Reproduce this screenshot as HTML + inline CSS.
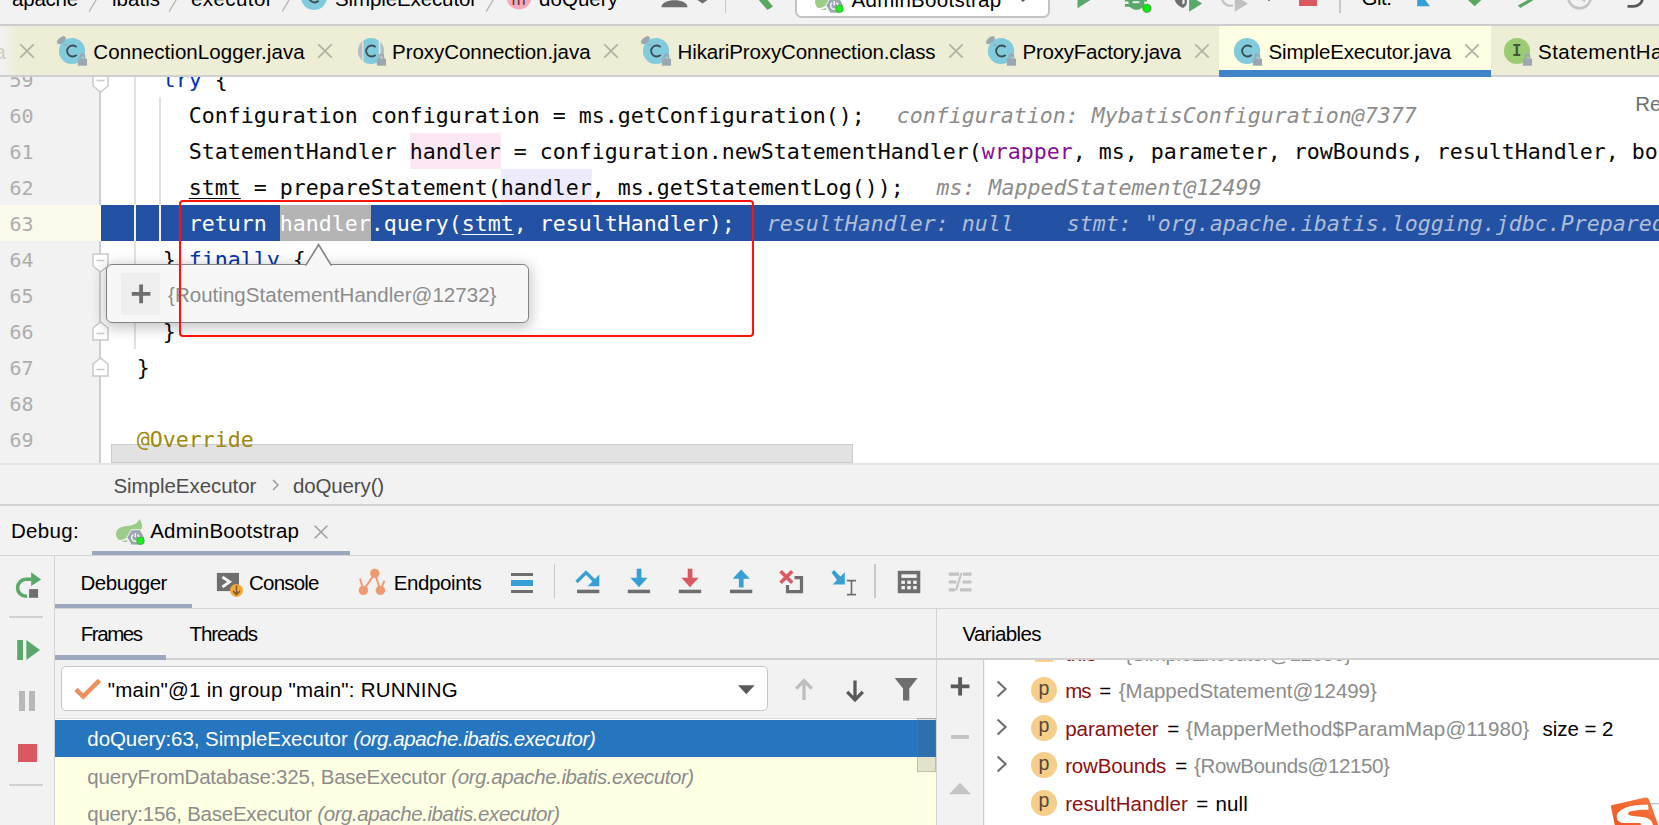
<!DOCTYPE html>
<html lang="en"><head><meta charset="utf-8"><title>SimpleExecutor.java - Debug</title>
<style>
html,body{margin:0;padding:0}
body{width:1659px;height:825px;overflow:hidden;background:#fff;position:relative;font-family:"Liberation Sans",sans-serif}
body>div,body>span,body>svg{position:absolute;display:block}
span{white-space:pre;line-height:1}
</style></head>
<body>
<div style="left:0px;top:77px;width:100px;height:386px;background:#f2f2f2;"></div>
<div style="left:99.3px;top:77px;width:1.5px;height:386px;background:#cfcfcf;"></div>
<div style="left:0px;top:205px;width:100.8px;height:36px;background:#fcfaed;"></div>
<div style="left:100.8px;top:205px;width:1559px;height:36px;background:#2352a5;"></div>
<div style="left:134.3px;top:77px;width:1.5px;height:272px;background:#e2e2e2;"></div>
<div style="left:159.3px;top:97px;width:1.5px;height:144px;background:#e2e2e2;"></div>
<div style="left:159.3px;top:277px;width:1.5px;height:36px;background:#e2e2e2;"></div>
<div style="left:133.9px;top:205px;width:2.1px;height:36px;background:#f6f1e6;"></div>
<div style="left:158.9px;top:205px;width:2.1px;height:36px;background:#f6f1e6;"></div>
<div style="left:410px;top:133px;width:90.5px;height:36px;background:#fce8f4;"></div>
<div style="left:501px;top:169px;width:91px;height:36px;background:#edebfc;"></div>
<div style="left:280px;top:205px;width:91px;height:36px;background:#b4b4b4;"></div>
<span style="left:9.6px;top:70.48px;font-size:20px;color:#adadad;font-family:'DejaVu Sans Mono', 'Liberation Mono', monospace;letter-spacing:-0.047px;">59</span>
<span style="left:9.6px;top:106.48px;font-size:20px;color:#adadad;font-family:'DejaVu Sans Mono', 'Liberation Mono', monospace;letter-spacing:-0.047px;">60</span>
<span style="left:9.6px;top:142.48px;font-size:20px;color:#adadad;font-family:'DejaVu Sans Mono', 'Liberation Mono', monospace;letter-spacing:-0.047px;">61</span>
<span style="left:9.6px;top:178.48px;font-size:20px;color:#adadad;font-family:'DejaVu Sans Mono', 'Liberation Mono', monospace;letter-spacing:-0.047px;">62</span>
<span style="left:9.6px;top:214.48px;font-size:20px;color:#adadad;font-family:'DejaVu Sans Mono', 'Liberation Mono', monospace;letter-spacing:-0.047px;">63</span>
<span style="left:9.6px;top:250.48px;font-size:20px;color:#adadad;font-family:'DejaVu Sans Mono', 'Liberation Mono', monospace;letter-spacing:-0.047px;">64</span>
<span style="left:9.6px;top:286.48px;font-size:20px;color:#adadad;font-family:'DejaVu Sans Mono', 'Liberation Mono', monospace;letter-spacing:-0.047px;">65</span>
<span style="left:9.6px;top:322.48px;font-size:20px;color:#adadad;font-family:'DejaVu Sans Mono', 'Liberation Mono', monospace;letter-spacing:-0.047px;">66</span>
<span style="left:9.6px;top:358.48px;font-size:20px;color:#adadad;font-family:'DejaVu Sans Mono', 'Liberation Mono', monospace;letter-spacing:-0.047px;">67</span>
<span style="left:9.6px;top:394.48px;font-size:20px;color:#adadad;font-family:'DejaVu Sans Mono', 'Liberation Mono', monospace;letter-spacing:-0.047px;">68</span>
<span style="left:9.6px;top:430.48px;font-size:20px;color:#adadad;font-family:'DejaVu Sans Mono', 'Liberation Mono', monospace;letter-spacing:-0.047px;">69</span>
<span style="left:162.8px;top:69.03px;font-size:21.6px;color:#0033b3;font-family:'DejaVu Sans Mono', 'Liberation Mono', monospace;letter-spacing:-0.005px;">try</span>
<span style="left:214.8px;top:69.03px;font-size:21.6px;color:#080808;font-family:'DejaVu Sans Mono', 'Liberation Mono', monospace;letter-spacing:-0.016px;">{</span>
<span style="left:188.8px;top:105.03px;font-size:21.6px;color:#080808;font-family:'DejaVu Sans Mono', 'Liberation Mono', monospace;letter-spacing:-0.001px;">Configuration configuration = ms.getConfiguration();</span>
<span style="left:896.8px;top:105.03px;font-size:21.6px;color:#8c8c8c;font-family:'DejaVu Sans Mono', 'Liberation Mono', monospace;font-style:italic;letter-spacing:-0.001px;">configuration: MybatisConfiguration@7377</span>
<span style="left:188.8px;top:141.03px;font-size:21.6px;color:#080808;font-family:'DejaVu Sans Mono', 'Liberation Mono', monospace;letter-spacing:-0.001px;">StatementHandler handler = configuration.newStatementHandler(</span>
<span style="left:981.8px;top:141.03px;font-size:21.6px;color:#871094;font-family:'DejaVu Sans Mono', 'Liberation Mono', monospace;letter-spacing:-0.002px;">wrapper</span>
<span style="left:1072.8px;top:141.03px;font-size:21.6px;color:#080808;font-family:'DejaVu Sans Mono', 'Liberation Mono', monospace;letter-spacing:-0.001px;">, ms, parameter, rowBounds, resultHandler, boundSql);</span>
<span style="left:188.8px;top:177.03px;font-size:21.6px;color:#080808;font-family:'DejaVu Sans Mono', 'Liberation Mono', monospace;letter-spacing:-0.004px;text-decoration:underline;text-decoration-thickness:1.1px;text-underline-offset:2.6px;">stmt</span>
<span style="left:240.8px;top:177.03px;font-size:21.6px;color:#080808;font-family:'DejaVu Sans Mono', 'Liberation Mono', monospace;letter-spacing:-0.001px;"> = prepareStatement(handler, ms.getStatementLog());</span>
<span style="left:936.6px;top:177.03px;font-size:21.6px;color:#8c8c8c;font-family:'DejaVu Sans Mono', 'Liberation Mono', monospace;font-style:italic;letter-spacing:-0.001px;">ms: MappedStatement@12499</span>
<span style="left:188.8px;top:213.03px;font-size:21.6px;color:#ffffff;font-family:'DejaVu Sans Mono', 'Liberation Mono', monospace;letter-spacing:-0.001px;">return handler.query(</span>
<span style="left:461.8px;top:213.03px;font-size:21.6px;color:#ffffff;font-family:'DejaVu Sans Mono', 'Liberation Mono', monospace;letter-spacing:-0.004px;text-decoration:underline;text-decoration-thickness:1.1px;text-underline-offset:2.6px;">stmt</span>
<span style="left:513.8px;top:213.03px;font-size:21.6px;color:#ffffff;font-family:'DejaVu Sans Mono', 'Liberation Mono', monospace;letter-spacing:-0.001px;">, resultHandler);</span>
<span style="left:766.8px;top:213.03px;font-size:21.6px;color:#b0bdd6;font-family:'DejaVu Sans Mono', 'Liberation Mono', monospace;font-style:italic;letter-spacing:-0.001px;">resultHandler: null</span>
<span style="left:1066.8px;top:213.03px;font-size:21.6px;color:#b0bdd6;font-family:'DejaVu Sans Mono', 'Liberation Mono', monospace;font-style:italic;letter-spacing:-0.001px;">stmt: &quot;org.apache.ibatis.logging.jdbc.PreparedStatementLogger@1f1cae23&quot;</span>
<span style="left:162.8px;top:249.03px;font-size:21.6px;color:#080808;font-family:'DejaVu Sans Mono', 'Liberation Mono', monospace;letter-spacing:-0.016px;">}</span>
<span style="left:188.8px;top:249.03px;font-size:21.6px;color:#0033b3;font-family:'DejaVu Sans Mono', 'Liberation Mono', monospace;letter-spacing:-0.002px;">finally</span>
<span style="left:292.8px;top:249.03px;font-size:21.6px;color:#080808;font-family:'DejaVu Sans Mono', 'Liberation Mono', monospace;letter-spacing:-0.016px;">{</span>
<span style="left:188.8px;top:285.03px;font-size:21.6px;color:#080808;font-family:'DejaVu Sans Mono', 'Liberation Mono', monospace;letter-spacing:-0.001px;">closeStatement(stmt);</span>
<span style="left:162.8px;top:321.03px;font-size:21.6px;color:#080808;font-family:'DejaVu Sans Mono', 'Liberation Mono', monospace;letter-spacing:-0.016px;">}</span>
<span style="left:136.8px;top:357.03px;font-size:21.6px;color:#080808;font-family:'DejaVu Sans Mono', 'Liberation Mono', monospace;letter-spacing:-0.016px;">}</span>
<span style="left:136.8px;top:429.03px;font-size:21.6px;color:#9e880d;font-family:'DejaVu Sans Mono', 'Liberation Mono', monospace;letter-spacing:-0.002px;z-index:3;">@Override</span>
<svg style="left:91.6px;top:72.7px;" width="17" height="20" viewBox="0 0 17 20"><path d="M1 1 H16 V13 L8.5 19 L1 13 Z" fill="#fff" stroke="#c9c9c9" stroke-width="1.5"/><path d="M4.5 7.5 H12.5" stroke="#c9c9c9" stroke-width="1.5"/></svg>
<svg style="left:91.6px;top:252.7px;" width="17" height="20" viewBox="0 0 17 20"><path d="M1 1 H16 V13 L8.5 19 L1 13 Z" fill="#fff" stroke="#c9c9c9" stroke-width="1.5"/><path d="M4.5 7.5 H12.5" stroke="#c9c9c9" stroke-width="1.5"/></svg>
<svg style="left:91.6px;top:321.1px;" width="17" height="20" viewBox="0 0 17 20"><path d="M1 19 H16 V7 L8.5 1 L1 7 Z" fill="#fff" stroke="#c9c9c9" stroke-width="1.5"/><path d="M4.5 12.5 H12.5" stroke="#c9c9c9" stroke-width="1.5"/></svg>
<svg style="left:91.6px;top:357.1px;" width="17" height="20" viewBox="0 0 17 20"><path d="M1 19 H16 V7 L8.5 1 L1 7 Z" fill="#fff" stroke="#c9c9c9" stroke-width="1.5"/><path d="M4.5 12.5 H12.5" stroke="#c9c9c9" stroke-width="1.5"/></svg>
<span style="left:1635.3px;top:93.55px;font-size:20.5px;color:#707070;">Re</span>
<div style="left:100.8px;top:444.5px;width:1559px;height:18.5px;background:#ffffff;"></div>
<div style="left:111px;top:444.2px;width:741.7px;height:18.8px;background:#e2e2e2;border:1.3px solid #cbcbcb;box-sizing:border-box"></div>
<div style="left:0px;top:0px;width:1659px;height:25px;background:#f2f2f2;"></div>
<div style="left:0px;top:24.3px;width:1659px;height:1.7px;background:#cdcdcd;"></div>
<span style="left:12px;top:-11.05px;font-size:20.5px;color:#000;letter-spacing:-0.211px;">apache</span>
<svg style="left:88px;top:0px;" width="12" height="13" viewBox="0 0 12 13"><path d="M8.6 -1 L1.2 11.6" stroke="#b4b4b4" stroke-width="1.3"/></svg>
<span style="left:112px;top:-11.05px;font-size:20.5px;color:#000;letter-spacing:0.023px;">ibatis</span>
<svg style="left:168px;top:0px;" width="12" height="13" viewBox="0 0 12 13"><path d="M8.6 -1 L1.2 11.6" stroke="#b4b4b4" stroke-width="1.3"/></svg>
<span style="left:191px;top:-11.05px;font-size:20.5px;color:#000;letter-spacing:0.420px;">executor</span>
<svg style="left:281px;top:0px;" width="12" height="13" viewBox="0 0 12 13"><path d="M8.6 -1 L1.2 11.6" stroke="#b4b4b4" stroke-width="1.3"/></svg>
<svg style="left:300px;top:-17px;" width="28" height="28" viewBox="0 0 28 28"><circle cx="14" cy="14" r="13" fill="#82cbdc"/><path d="M18.6 17.6a5.4 5.4 0 1 1 0-7.2" fill="none" stroke="#3b4b53" stroke-width="2"/></svg>
<span style="left:335px;top:-11.05px;font-size:20.5px;color:#000;letter-spacing:-0.112px;">SimpleExecutor</span>
<svg style="left:485px;top:0px;" width="12" height="13" viewBox="0 0 12 13"><path d="M8.6 -1 L1.2 11.6" stroke="#b4b4b4" stroke-width="1.3"/></svg>
<svg style="left:505.5px;top:-15.6px;" width="26" height="26" viewBox="0 0 26 26"><circle cx="13" cy="13" r="12.5" fill="#f4a9bb"/></svg>
<span style="left:511.5px;top:-8.79px;font-size:17px;color:#5a3540;">m</span>
<span style="left:539px;top:-11.05px;font-size:20.5px;color:#000;letter-spacing:0.051px;">doQuery</span>
<svg style="left:660px;top:0px;" width="50" height="10" viewBox="0 0 50 10"><path d="M1.5 7.2 C1.5 -2 27.5 -2 27.5 7.2 Z" fill="#6e6e6e"/><path d="M37.5 0 L47.5 0 L42.5 3.6 Z" fill="#6e6e6e"/></svg>
<div style="left:724.5px;top:0px;width:1.6px;height:12.6px;background:#c8c8c8;"></div>
<svg style="left:750px;top:0px;" width="30" height="12" viewBox="0 0 30 12"><path d="M7 -2 L12.5 -6 L23 6.6 L17.5 10 Z" fill="#5aa55f"/></svg>
<div style="left:794.6px;top:-20px;width:255.6px;height:37.6px;background:#fff;border:2px solid #c4c4c4;border-radius:6.5px;box-sizing:border-box"></div>
<svg style="left:813px;top:-16.3px;" width="34" height="32" viewBox="0 0 34 32"><path d="M25.6 3 C27.5 6 28.6 9 28.1 12 L26 14.5 L14 20.5 C11 23 7.5 24.6 4.6 23.7 C1.5 21 1.2 16 4 13 C7 10.2 12 10.2 17 9.4 C21 8.5 24 6.5 25.6 3Z" fill="#9ccc8a"/><path d="M7.1 25.9 L13.2 23.8 L13.2 26 Z" fill="#9ccc8a"/><path d="M12.9 21.4 L17.3 13.7 H26.1 L30.5 21.4 L26.1 29.1 H17.3 Z" fill="#9aa7b0" stroke="#f2f2f2" stroke-width="1"/><path d="M19.2 18.6 a3.7 3.7 0 1 0 4.2 0 M21.3 17 v4.2" stroke="#f2f2f2" stroke-width="1.5" fill="none"/><circle cx="26.5" cy="24.8" r="3.8" fill="#1ef01e" stroke="#3a9a3a" stroke-width=".7"/></svg>
<span style="left:851.5px;top:-10.45px;font-size:20.5px;color:#000;letter-spacing:0.296px;">AdminBootstrap</span>
<svg style="left:1015px;top:0px;" width="16" height="5" viewBox="0 0 16 5"><path d="M2.5 -3.2 L13.5 -3.2 L8 2.1 Z" fill="#595959"/></svg>
<svg style="left:1075px;top:0px;" width="22" height="10" viewBox="0 0 22 10"><path d="M2.5 -14 L2.5 8.2 L20 -2.9 Z" fill="#59a869"/></svg>
<svg style="left:1120px;top:0px;" width="34" height="14" viewBox="0 0 34 14"><path d="M8.5 -2 H24.4 V2.5 C24.4 6.8 20.8 9.8 16.45 9.8 C12.1 9.8 8.5 6.8 8.5 2.5 Z" fill="#59a869"/><rect x="4.9" y="-2" width="22.1" height="3.5" fill="#59a869"/><rect x="4.9" y="4" width="6" height="2.8" fill="#59a869"/><rect x="12.6" y="1.3" width="6.8" height="1.9" fill="#f2f2f2"/><circle cx="26.9" cy="8.3" r="4.1" fill="#00ee00" stroke="#4d7a4d" stroke-width=".7"/></svg>
<svg style="left:1170px;top:0px;" width="36" height="13" viewBox="0 0 36 13"><path d="M4.2 -2 C5 3 8.5 6.5 13.2 8 C15.5 6.5 16.9 4.5 16.9 2 L16.9 -2 Z" fill="#6e6e6e"/><path d="M12.6 -2 L14.6 -2 L14.6 3.2 L12.2 4.6 Z" fill="#f2f2f2"/><path d="M19.1 -4.6 L32.2 3.6 L19.1 11.8 Z" fill="#59a869"/></svg>
<svg style="left:1215px;top:0px;" width="36" height="13" viewBox="0 0 36 13"><path d="M6.9 -3 A8.6 8.6 0 0 0 18 5.4" fill="none" stroke="#c4c4c4" stroke-width="2.4"/><path d="M19.8 -4.6 L32.9 3.6 L19.8 11.8 Z" fill="#c0c0c0"/></svg>
<svg style="left:1262px;top:0px;" width="14" height="4" viewBox="0 0 14 4"><path d="M3 -3 L11 -3 L7 1.2 Z" fill="#4d4d4d"/></svg>
<div style="left:1299px;top:0px;width:18.3px;height:6px;background:#db5860;"></div>
<div style="left:1339px;top:0px;width:1.6px;height:12.6px;background:#c8c8c8;"></div>
<span style="left:1361.5px;top:-11.55px;font-size:20.5px;color:#000;letter-spacing:-0.477px;">Git:</span>
<svg style="left:1412px;top:0px;" width="24" height="8" viewBox="0 0 24 8"><path d="M5.2 -6 L5.2 6.2 L18 6.2 L11.5 -2.5 L11.5 -6 Z" fill="#389fd6"/></svg>
<svg style="left:1462px;top:0px;" width="26" height="8" viewBox="0 0 26 8"><path d="M6 0 L12.6 6.3 L19.3 0 Z" fill="#5aa55f"/></svg>
<svg style="left:1512px;top:0px;" width="26" height="9" viewBox="0 0 26 9"><path d="M18.5 -1.6 L21 0.6 L8.3 7.9 L5.8 5.6 Z" fill="#5aa55f"/></svg>
<svg style="left:1562px;top:0px;" width="36" height="12" viewBox="0 0 36 12"><circle cx="17.5" cy="-3" r="11.3" fill="none" stroke="#c4c4c4" stroke-width="2.6"/><path d="M17.5 -3 L23 1.5" stroke="#c4c4c4" stroke-width="2"/></svg>
<svg style="left:1622px;top:0px;" width="28" height="10" viewBox="0 0 28 10"><path d="M5.5 6.3 L12 6.3 A8.5 8.5 0 0 0 20.5 -2.2" fill="none" stroke="#595959" stroke-width="2.8"/></svg>
<div style="left:0px;top:26px;width:1659px;height:49.5px;background:#eeedd6;"></div>
<div style="left:1219px;top:26px;width:272px;height:49.5px;background:#ffffe4;"></div>
<div style="left:0px;top:75.2px;width:1659px;height:1.8px;background:#cfcfcf;"></div>
<div style="left:1219px;top:70.2px;width:272px;height:6.5px;background:#4083c9;"></div>
<div style="left:0;top:26.5px;width:18px;height:48.7px;background:linear-gradient(90deg,#f2f2f2,#eeedd6)"></div>
<span style="left:-5.5px;top:42.25px;font-size:20.5px;color:#cfcfc4;">a</span>
<svg style="left:18px;top:42px;" width="18" height="18" viewBox="0 0 18 18"><path d="M2.3 2.3 L15.7 15.7 M15.7 2.3 L2.3 15.7" stroke="#b2b4a6" stroke-width="1.9" fill="none"/></svg>
<svg style="left:52px;top:30px;" width="40" height="40" viewBox="0 0 40 40"><circle cx="20" cy="21" r="13.1" fill="#82cbdc"/><path d="M24.6 24.8a5.5 5.5 0 1 1 0-7.6" fill="none" stroke="#3b4b53" stroke-width="1.8"/><ellipse cx="9.5" cy="10.2" rx="5.2" ry="2.9" transform="rotate(-38 9.5 10.2)" fill="#9aa7b0"/><path d="M11.5 13.5 L14.8 14.2 L15.6 17.6 Z" fill="#9aa7b0"/><rect x="25.9" y="28.7" width="9.1" height="7" fill="#9aa7b0"/><path d="M28.4 29 v-2.6 a2 2 0 0 1 4 0 v2.6" fill="none" stroke="#9aa7b0" stroke-width="1.7"/></svg>
<span style="left:93.3px;top:42.25px;font-size:20.5px;color:#000;letter-spacing:0.085px;">ConnectionLogger.java</span>
<svg style="left:316px;top:42px;" width="18" height="18" viewBox="0 0 18 18"><path d="M2.3 2.3 L15.7 15.7 M15.7 2.3 L2.3 15.7" stroke="#b2b4a6" stroke-width="1.9" fill="none"/></svg>
<svg style="left:351px;top:30px;" width="40" height="40" viewBox="0 0 40 40"><defs><clipPath id="cp1"><circle cx="20" cy="21" r="13.1"/></clipPath></defs><g clip-path="url(#cp1)"><rect x="6" y="7" width="5.2" height="28" fill="#b3bfc6"/><rect x="12.4" y="7" width="15.4" height="28" fill="#82cbdc"/><rect x="29.3" y="7" width="5" height="28" fill="#b3bfc6"/></g><path d="M24.6 24.8a5.5 5.5 0 1 1 0-7.6" fill="none" stroke="#3b4b53" stroke-width="1.8"/><rect x="25.9" y="28.7" width="9.1" height="7" fill="#9aa7b0"/><path d="M28.4 29 v-2.6 a2 2 0 0 1 4 0 v2.6" fill="none" stroke="#9aa7b0" stroke-width="1.7"/></svg>
<span style="left:392px;top:42.25px;font-size:20.5px;color:#000;letter-spacing:-0.046px;">ProxyConnection.java</span>
<svg style="left:601.9px;top:42px;" width="18" height="18" viewBox="0 0 18 18"><path d="M2.3 2.3 L15.7 15.7 M15.7 2.3 L2.3 15.7" stroke="#b2b4a6" stroke-width="1.9" fill="none"/></svg>
<svg style="left:635.5px;top:30px;" width="40" height="40" viewBox="0 0 40 40"><circle cx="20" cy="21" r="13.1" fill="#82cbdc"/><path d="M24.6 24.8a5.5 5.5 0 1 1 0-7.6" fill="none" stroke="#3b4b53" stroke-width="1.8"/><ellipse cx="9.5" cy="10.2" rx="5.2" ry="2.9" transform="rotate(-38 9.5 10.2)" fill="#9aa7b0"/><path d="M11.5 13.5 L14.8 14.2 L15.6 17.6 Z" fill="#9aa7b0"/><rect x="25.9" y="28.7" width="9.1" height="7" fill="#9aa7b0"/><path d="M28.4 29 v-2.6 a2 2 0 0 1 4 0 v2.6" fill="none" stroke="#9aa7b0" stroke-width="1.7"/></svg>
<span style="left:677.5px;top:42.25px;font-size:20.5px;color:#000;letter-spacing:-0.108px;">HikariProxyConnection.class</span>
<svg style="left:946.6px;top:42px;" width="18" height="18" viewBox="0 0 18 18"><path d="M2.3 2.3 L15.7 15.7 M15.7 2.3 L2.3 15.7" stroke="#b2b4a6" stroke-width="1.9" fill="none"/></svg>
<svg style="left:981px;top:30px;" width="40" height="40" viewBox="0 0 40 40"><circle cx="20" cy="21" r="13.1" fill="#82cbdc"/><path d="M24.6 24.8a5.5 5.5 0 1 1 0-7.6" fill="none" stroke="#3b4b53" stroke-width="1.8"/><ellipse cx="9.5" cy="10.2" rx="5.2" ry="2.9" transform="rotate(-38 9.5 10.2)" fill="#9aa7b0"/><path d="M11.5 13.5 L14.8 14.2 L15.6 17.6 Z" fill="#9aa7b0"/><rect x="25.9" y="28.7" width="9.1" height="7" fill="#9aa7b0"/><path d="M28.4 29 v-2.6 a2 2 0 0 1 4 0 v2.6" fill="none" stroke="#9aa7b0" stroke-width="1.7"/></svg>
<span style="left:1022.5px;top:42.25px;font-size:20.5px;color:#000;letter-spacing:-0.237px;">ProxyFactory.java</span>
<svg style="left:1193px;top:42px;" width="18" height="18" viewBox="0 0 18 18"><path d="M2.3 2.3 L15.7 15.7 M15.7 2.3 L2.3 15.7" stroke="#b2b4a6" stroke-width="1.9" fill="none"/></svg>
<svg style="left:1227px;top:30px;" width="40" height="40" viewBox="0 0 40 40"><circle cx="20" cy="21" r="13.1" fill="#82cbdc"/><path d="M24.6 24.8a5.5 5.5 0 1 1 0-7.6" fill="none" stroke="#3b4b53" stroke-width="1.8"/><rect x="25.9" y="28.7" width="9.1" height="7" fill="#9aa7b0"/><path d="M28.4 29 v-2.6 a2 2 0 0 1 4 0 v2.6" fill="none" stroke="#9aa7b0" stroke-width="1.7"/></svg>
<span style="left:1268.5px;top:42.25px;font-size:20.5px;color:#000;letter-spacing:-0.170px;">SimpleExecutor.java</span>
<svg style="left:1462.8px;top:42px;" width="18" height="18" viewBox="0 0 18 18"><path d="M2.3 2.3 L15.7 15.7 M15.7 2.3 L2.3 15.7" stroke="#b2b4a6" stroke-width="1.9" fill="none"/></svg>
<svg style="left:1496.7px;top:30px;" width="40" height="40" viewBox="0 0 40 40"><circle cx="20" cy="21" r="13.1" fill="#9ccb74"/><rect x="25.9" y="28.7" width="9.1" height="7" fill="#9aa7b0"/><path d="M28.4 29 v-2.6 a2 2 0 0 1 4 0 v2.6" fill="none" stroke="#9aa7b0" stroke-width="1.7"/></svg>
<span style="left:1512px;top:43.33px;font-size:15.8px;color:#46553a;font-family:'DejaVu Sans Mono', 'Liberation Mono', monospace;font-weight:bold;">I</span>
<span style="left:1538px;top:42.25px;font-size:20.5px;color:#000;letter-spacing:0.486px;">StatementHa</span>
<div style="left:0px;top:463px;width:1659px;height:362px;background:#f2f2f2;"></div>
<div style="left:0px;top:463px;width:1659px;height:1.8px;background:#e4e4e4;"></div>
<div style="left:0px;top:504px;width:1659px;height:1.8px;background:#d2d2d2;"></div>
<span style="left:113.4px;top:476.45px;font-size:20.5px;color:#4d4d4d;letter-spacing:-0.040px;">SimpleExecutor</span>
<svg style="left:270px;top:476px;" width="12" height="18" viewBox="0 0 12 18"><path d="M3 4 L8 9 L3 14" fill="none" stroke="#9c9c9c" stroke-width="1.5"/></svg>
<span style="left:293px;top:476.45px;font-size:20.5px;color:#4d4d4d;letter-spacing:-0.142px;">doQuery()</span>
<span style="left:11px;top:521.45px;font-size:20.5px;color:#000;letter-spacing:0.315px;">Debug:</span>
<svg style="left:114px;top:516px;" width="34" height="32" viewBox="0 0 34 32"><path d="M25.6 3 C27.5 6 28.6 9 28.1 12 L26 14.5 L14 20.5 C11 23 7.5 24.6 4.6 23.7 C1.5 21 1.2 16 4 13 C7 10.2 12 10.2 17 9.4 C21 8.5 24 6.5 25.6 3Z" fill="#9ccc8a"/><path d="M7.1 25.9 L13.2 23.8 L13.2 26 Z" fill="#9ccc8a"/><path d="M12.9 21.4 L17.3 13.7 H26.1 L30.5 21.4 L26.1 29.1 H17.3 Z" fill="#9aa7b0" stroke="#f2f2f2" stroke-width="1"/><path d="M19.2 18.6 a3.7 3.7 0 1 0 4.2 0 M21.3 17 v4.2" stroke="#f2f2f2" stroke-width="1.5" fill="none"/><circle cx="26.5" cy="24.8" r="3.8" fill="#1ef01e" stroke="#3a9a3a" stroke-width=".7"/></svg>
<span style="left:150.2px;top:521.45px;font-size:20.5px;color:#000;letter-spacing:0.224px;">AdminBootstrap</span>
<svg style="left:311.8px;top:522.5px;" width="18" height="18" viewBox="0 0 18 18"><path d="M2.5999999999999996 2.5999999999999996 L15.4 15.4 M15.4 2.5999999999999996 L2.5999999999999996 15.4" stroke="#a6a6a6" stroke-width="1.5" fill="none"/></svg>
<div style="left:92px;top:551.2px;width:257.5px;height:4.3px;background:#9ba7bd;"></div>
<div style="left:0px;top:555.2px;width:1659px;height:1.2px;background:#d4d4d4;"></div>
<div style="left:54px;top:556px;width:1.4px;height:269px;background:#d4d4d4;"></div>
<svg style="left:14px;top:570px;" width="30" height="30" viewBox="0 0 30 30"><path d="M17.3 9.15 H12.1 A8.55 8.55 0 0 0 12.1 26.25 H13.1" fill="none" stroke="#59a869" stroke-width="3.5"/><path d="M17.1 2.3 L27.2 9.4 L17.1 16.1 Z" fill="#59a869"/><rect x="15.1" y="19.1" width="9" height="8.7" fill="#6e6e6e"/></svg>
<span style="left:80.5px;top:572.65px;font-size:20.5px;color:#000;letter-spacing:-0.443px;">Debugger</span>
<div style="left:55.4px;top:604px;width:136.3px;height:4.3px;background:#9ba7bd;"></div>
<svg style="left:215px;top:570px;" width="30" height="28" viewBox="0 0 30 28"><rect x="1.9" y="2.9" width="22.1" height="18.2" fill="#6e6e6e"/><path d="M7.4 7 L14.6 11.8 L7.4 17" fill="none" stroke="#f4f4f4" stroke-width="2.8"/><circle cx="21.5" cy="20.4" r="6.5" fill="#f2a83a"/><path d="M21.5 15.6 V24.4 M18 21 L21.5 24.6 L25 21" fill="none" stroke="#7a5a20" stroke-width="1.5"/></svg>
<span style="left:249px;top:572.65px;font-size:20.5px;color:#000;letter-spacing:-0.788px;">Console</span>
<svg style="left:357px;top:567px;" width="32" height="31" viewBox="0 0 32 31"><path d="M3 11.4 L6.4 23.4 L17.8 6.4 L23.4 23.4 L27.4 13.6" fill="none" stroke="#f09a72" stroke-width="1.9"/><circle cx="17.8" cy="6.4" r="4.7" fill="#f09a72"/><circle cx="6.4" cy="23.4" r="4.7" fill="#f09a72"/><circle cx="23.4" cy="23.4" r="4.7" fill="#f09a72"/></svg>
<span style="left:393.8px;top:572.65px;font-size:20.5px;color:#000;letter-spacing:-0.410px;">Endpoints</span>
<div style="left:510.6px;top:572.6px;width:22.6px;height:3.5px;background:#6e6e6e;"></div>
<div style="left:510.6px;top:580.1px;width:22.6px;height:5.8px;background:#389fd6;"></div>
<div style="left:510.6px;top:589.7px;width:22.6px;height:3.5px;background:#6e6e6e;"></div>
<div style="left:553.6px;top:564.4px;width:1.5px;height:33.2px;background:#c8c8c8;"></div>
<svg style="left:572px;top:566px;" width="32" height="30" viewBox="0 0 32 30"><path d="M4.5 16 L14 6.5 L24 16.5" fill="none" stroke="#389fd6" stroke-width="3.3"/><path d="M27.3 8.5 V20.2 H15.6 Z" fill="#389fd6"/><rect x="5" y="23.7" width="22.3" height="3.5" fill="#6e6e6e"/></svg>
<svg style="left:626px;top:566px;" width="32" height="30" viewBox="0 0 32 30"><rect x="10.7" y="2.7" width="4.7" height="11" fill="#389fd6"/><path d="M4.4 11.8 H21.6 L13 21.2 Z" fill="#389fd6"/><rect x="1.8" y="23.7" width="22.3" height="3.5" fill="#6e6e6e"/></svg>
<svg style="left:677px;top:566px;" width="32" height="30" viewBox="0 0 32 30"><rect x="10.7" y="2.7" width="4.7" height="11" fill="#db5860"/><path d="M4.4 11.8 H21.6 L13 21.2 Z" fill="#db5860"/><rect x="1.8" y="23.7" width="22.3" height="3.5" fill="#6e6e6e"/></svg>
<svg style="left:728px;top:566px;" width="32" height="30" viewBox="0 0 32 30"><rect x="10.9" y="10" width="4.7" height="11.5" fill="#389fd6"/><path d="M4.6 12.8 H21.8 L13.2 3.4 Z" fill="#389fd6"/><rect x="2" y="23.7" width="22.3" height="3.5" fill="#6e6e6e"/></svg>
<svg style="left:776px;top:566px;" width="32" height="30" viewBox="0 0 32 30"><path d="M4.6 5.2 L16.2 16.8 M16.2 5.2 L4.6 16.8" stroke="#db5860" stroke-width="3.6"/><path d="M18.5 11.6 H25.5 V25.6 H11.5 V19" fill="none" stroke="#6e6e6e" stroke-width="3.2"/></svg>
<svg style="left:828px;top:566px;" width="32" height="32" viewBox="0 0 32 32"><path d="M3.5 6.5 L6 4 L12.5 10.4 L16.8 6.3 V18.4 H4.6 L9 14 Z" fill="#389fd6"/><path d="M19 14.6 h9 M19 28.6 h9 M23.5 14.6 v14" stroke="#6e6e6e" stroke-width="1.6" fill="none"/></svg>
<div style="left:874.3px;top:564.4px;width:1.5px;height:33.2px;background:#c8c8c8;"></div>
<svg style="left:896px;top:569px;" width="26" height="26" viewBox="0 0 26 26"><rect x="1.8" y="1.8" width="22.5" height="22.4" fill="#6e6e6e"/><rect x="5.4" y="5.3" width="15.3" height="3.6" fill="#f2f2f2"/><rect x="5.4" y="11.6" width="3.5" height="3.3" fill="#f2f2f2"/><rect x="5.4" y="17.0" width="3.5" height="3.3" fill="#f2f2f2"/><rect x="11.3" y="11.6" width="3.5" height="3.3" fill="#f2f2f2"/><rect x="11.3" y="17.0" width="3.5" height="3.3" fill="#f2f2f2"/><rect x="17.200000000000003" y="11.6" width="3.5" height="3.3" fill="#f2f2f2"/><rect x="17.200000000000003" y="17.0" width="3.5" height="3.3" fill="#f2f2f2"/></svg>
<svg style="left:947px;top:570px;" width="26" height="24" viewBox="0 0 26 24"><path d="M1.8 4.2 H12 M16 4.2 H24.5 M1.8 12 H9.5 M15.5 12 H24.5 M1.8 19.8 H8 M13 19.8 H24.5" stroke="#c2c2c2" stroke-width="3.2"/><path d="M9 20.5 L14.5 3" stroke="#c2c2c2" stroke-width="2"/></svg>
<div style="left:55.4px;top:608px;width:1604px;height:1.2px;background:#d4d4d4;"></div>
<div style="left:9px;top:616.4px;width:34px;height:1.3px;background:#d1d1d1;"></div>
<svg style="left:15px;top:637px;" width="28" height="26" viewBox="0 0 28 26"><rect x="2.2" y="3" width="5.8" height="20" fill="#59a869"/><path d="M11.4 3 L25 13 L11.4 23 Z" fill="#59a869"/></svg>
<div style="left:19.3px;top:691px;width:6px;height:20px;background:#b8b8b8;"></div>
<div style="left:28.7px;top:691px;width:6px;height:20px;background:#b8b8b8;"></div>
<div style="left:17.5px;top:743.7px;width:19px;height:18.5px;background:#db5860;"></div>
<div style="left:9px;top:784.4px;width:34px;height:1.3px;background:#d1d1d1;"></div>
<span style="left:80.8px;top:623.95px;font-size:20.5px;color:#000;letter-spacing:-1.447px;">Frames</span>
<span style="left:189.5px;top:623.95px;font-size:20.5px;color:#000;letter-spacing:-1.103px;">Threads</span>
<div style="left:55.4px;top:658px;width:1604px;height:2px;background:#d0d0d0;"></div>
<div style="left:55.4px;top:655px;width:110.6px;height:4.6px;background:#9ba7bd;"></div>
<div style="left:935.6px;top:609px;width:1.5px;height:216px;background:#d2d2d2;"></div>
<div style="left:61.3px;top:666px;width:707px;height:45px;background:#fff;border:1.8px solid #c6c6c6;border-radius:5px;box-sizing:border-box"></div>
<svg style="left:73px;top:676px;" width="30" height="25" viewBox="0 0 30 25"><path d="M3 13.3 L10.2 20.6 L26.4 4.3" fill="none" stroke="#f0905c" stroke-width="4.6"/></svg>
<span style="left:107.7px;top:679.95px;font-size:20.5px;color:#000;letter-spacing:0.230px;">&quot;main&quot;@1 in group &quot;main&quot;: RUNNING</span>
<svg style="left:735px;top:683px;" width="22" height="14" viewBox="0 0 22 14"><path d="M3 2.2 H19.6 L11.3 11.2 Z" fill="#595959"/></svg>
<svg style="left:792px;top:676px;" width="24" height="27" viewBox="0 0 24 27"><path d="M12 4.4 V24 M4.2 12.6 L12 4.6 L19.8 12.6" fill="none" stroke="#bdbdbd" stroke-width="3.3"/></svg>
<svg style="left:842.6px;top:676px;" width="24" height="27" viewBox="0 0 24 27"><g transform="translate(0,28.4) scale(1,-1)"><path d="M12 4.4 V24 M4.2 12.6 L12 4.6 L19.8 12.6" fill="none" stroke="#595959" stroke-width="3.3"/></g></svg>
<svg style="left:892px;top:676px;" width="28" height="26" viewBox="0 0 28 26"><path d="M2.7 2 H25.6 L17.3 12.6 V24.4 H11 V12.6 Z" fill="#6e6e6e"/></svg>
<div style="left:55.4px;top:717.5px;width:881px;height:1.2px;background:#dcdcdc;"></div>
<div style="left:55.4px;top:718.7px;width:881px;height:1.6px;background:#ffffff;"></div>
<div style="left:55.4px;top:757px;width:881px;height:68px;background:#ffffe4;"></div>
<div style="left:55.4px;top:720.3px;width:881px;height:36.7px;background:#2675bf;"></div>
<span style="left:87.3px;top:728.95px;font-size:20.5px;color:#fff;letter-spacing:-0.066px;">doQuery:63, SimpleExecutor </span>
<span style="left:353.3px;top:728.95px;font-size:20.5px;color:#fff;font-style:italic;letter-spacing:-0.432px;">(org.apache.ibatis.executor)</span>
<span style="left:87.3px;top:766.55px;font-size:20.5px;color:#8c8c8c;letter-spacing:-0.208px;">queryFromDatabase:325, BaseExecutor </span>
<span style="left:451.3px;top:766.55px;font-size:20.5px;color:#8c8c8c;font-style:italic;letter-spacing:-0.415px;">(org.apache.ibatis.executor)</span>
<span style="left:87.3px;top:803.95px;font-size:20.5px;color:#8c8c8c;letter-spacing:-0.245px;">query:156, BaseExecutor </span>
<span style="left:317.3px;top:803.95px;font-size:20.5px;color:#8c8c8c;font-style:italic;letter-spacing:-0.415px;">(org.apache.ibatis.executor)</span>
<div style="left:917.4px;top:718px;width:18.6px;height:53.5px;background:rgba(90,90,90,.17);border:1px solid rgba(120,120,120,.35);box-sizing:border-box"></div>
<div style="left:984.6px;top:659.5px;width:675px;height:166px;background:#ffffff;"></div>
<div style="left:982.6px;top:660px;width:1.8px;height:166px;background:#cdcdcd;"></div>
<svg style="left:948px;top:675px;" width="24" height="23" viewBox="0 0 24 23"><path d="M12.1 2.3 V20.6 M2.8 11.4 H21.4" stroke="#595959" stroke-width="3.9"/></svg>
<div style="left:950.7px;top:735px;width:18.8px;height:3.6px;background:#c4c4c4;"></div>
<svg style="left:947px;top:781px;" width="26" height="15" viewBox="0 0 26 15"><path d="M2 13.3 L13 1.8 L24 13.3 Z" fill="#c4c4c4"/></svg>
<span style="left:1065.2px;top:643.85px;font-size:20.5px;color:#8b0f0f;letter-spacing:-0.227px;">this</span>
<span style="left:1104px;top:643.85px;font-size:20.5px;color:#000;">=</span>
<span style="left:1125px;top:643.85px;font-size:20.5px;color:#8c8c8c;letter-spacing:-0.413px;">{SimpleExecutor@12690}</span>
<div style="left:1034.5px;top:655px;width:18.5px;height:7.4px;background:#f8d089;"></div>
<svg style="left:994px;top:679.4000000000001px;" width="16" height="20" viewBox="0 0 16 20"><path d="M3.6 2.6 L11.6 10 L3.6 17.4" fill="none" stroke="#6e6e6e" stroke-width="2.1"/></svg>
<svg style="left:1030px;top:676.0px;" width="28" height="28" viewBox="0 0 28 28"><circle cx="14" cy="14" r="13" fill="#f7cd8a"/></svg>
<span style="left:1038.4px;top:678.89px;font-size:19.5px;color:#55483a;">p</span>
<span style="left:1065.2px;top:681.35px;font-size:20.5px;color:#8b0f0f;letter-spacing:-0.914px;">ms</span>
<span style="left:1099.2px;top:681.35px;font-size:20.5px;color:#000;letter-spacing:-1.484px;">=</span>
<span style="left:1118.8px;top:681.35px;font-size:20.5px;color:#8c8c8c;letter-spacing:-0.046px;">{MappedStatement@12499}</span>
<svg style="left:994px;top:716.9000000000001px;" width="16" height="20" viewBox="0 0 16 20"><path d="M3.6 2.6 L11.6 10 L3.6 17.4" fill="none" stroke="#6e6e6e" stroke-width="2.1"/></svg>
<svg style="left:1030px;top:713.5px;" width="28" height="28" viewBox="0 0 28 28"><circle cx="14" cy="14" r="13" fill="#f7cd8a"/></svg>
<span style="left:1038.4px;top:716.39px;font-size:19.5px;color:#55483a;">p</span>
<span style="left:1065.2px;top:718.85px;font-size:20.5px;color:#8b0f0f;letter-spacing:0.007px;">parameter</span>
<span style="left:1167.2px;top:718.85px;font-size:20.5px;color:#000;letter-spacing:-1.484px;">=</span>
<span style="left:1186px;top:718.85px;font-size:20.5px;color:#8c8c8c;letter-spacing:0.137px;">{MapperMethod$ParamMap@11980}</span>
<span style="left:1542.5px;top:718.85px;font-size:20.5px;color:#000;letter-spacing:-0.029px;">size = 2</span>
<svg style="left:994px;top:754.3000000000001px;" width="16" height="20" viewBox="0 0 16 20"><path d="M3.6 2.6 L11.6 10 L3.6 17.4" fill="none" stroke="#6e6e6e" stroke-width="2.1"/></svg>
<svg style="left:1030px;top:750.9px;" width="28" height="28" viewBox="0 0 28 28"><circle cx="14" cy="14" r="13" fill="#f7cd8a"/></svg>
<span style="left:1038.4px;top:753.79px;font-size:19.5px;color:#55483a;">p</span>
<span style="left:1065.2px;top:756.25px;font-size:20.5px;color:#8b0f0f;letter-spacing:-0.174px;">rowBounds</span>
<span style="left:1175.2px;top:756.25px;font-size:20.5px;color:#000;letter-spacing:-1.484px;">=</span>
<span style="left:1194px;top:756.25px;font-size:20.5px;color:#8c8c8c;letter-spacing:-0.386px;">{RowBounds@12150}</span>
<svg style="left:1030px;top:788.5px;" width="28" height="28" viewBox="0 0 28 28"><circle cx="14" cy="14" r="13" fill="#f7cd8a"/></svg>
<span style="left:1038.4px;top:791.39px;font-size:19.5px;color:#55483a;">p</span>
<span style="left:1065.2px;top:793.85px;font-size:20.5px;color:#8b0f0f;letter-spacing:0.060px;">resultHandler</span>
<span style="left:1196.2px;top:793.85px;font-size:20.5px;color:#000;letter-spacing:-1.484px;">=</span>
<span style="left:1215.5px;top:793.85px;font-size:20.5px;color:#000;letter-spacing:0.145px;">null</span>
<div style="left:937.5px;top:609.2px;width:722px;height:49px;background:#f2f2f2;"></div>
<span style="left:962.5px;top:623.95px;font-size:20.5px;color:#000;letter-spacing:-0.606px;">Variables</span>
<div style="left:937.1px;top:658px;width:722px;height:2px;background:#d0d0d0;"></div>
<div style="left:106.3px;top:264.4px;width:422.3px;height:58.6px;background:#f7f7f7;border:1.6px solid #838383;border-radius:6px;box-sizing:border-box;box-shadow:0 3px 14px 2px rgba(0,0,0,.23);z-index:5"></div>
<svg style="left:300px;top:240px;z-index:6;" width="40" height="27" viewBox="0 0 40 27"><path d="M5.6 25.6 L18.6 4.6 L31.4 25.6" fill="#f7f7f7" stroke="#838383" stroke-width="1.6"/><rect x="6.8" y="25.2" width="23.4" height="2" fill="#f7f7f7"/></svg>
<div style="left:120.6px;top:273px;width:39.4px;height:42px;background:#efefef;z-index:6;"></div>
<svg style="left:128px;top:281px;z-index:7;" width="26" height="26" viewBox="0 0 26 26"><path d="M13.1 3.6 V22.2 M3.8 12.9 H22.4" stroke="#6e6e6e" stroke-width="3.8"/></svg>
<span style="left:168px;top:284.95px;font-size:20.5px;color:#8c8c8c;letter-spacing:0.035px;z-index:7;">{RoutingStatementHandler@12732}</span>
<div style="left:179px;top:199.9px;width:575px;height:136.8px;border:2.2px solid #fc1408;border-radius:4px;box-sizing:border-box;z-index:9"></div>
<svg style="left:1605px;top:790px;z-index:9;" width="54" height="35" viewBox="1605 790 54 35"><defs><linearGradient id="lg1" x1="0" y1="1" x2="1" y2="0"><stop offset="0" stop-color="#f2551c"/><stop offset="1" stop-color="#f67a45"/></linearGradient></defs><path d="M1650 803.7 H1659" stroke="#b4c4dc" stroke-width="1.3"/><path d="M1611 807 Q1610.5 805.5 1612.5 805 L1645.3 797.5 Q1648 797 1648.9 799.2 L1658.6 826 L1615 826 Z" fill="url(#lg1)"/><path d="M1648 804.8 C1640 804.4 1632 805 1626 807.5 C1620 810 1616.7 813 1616.7 816.5 C1616.7 820 1619 822.6 1623 823 L1640.6 823 L1641 826 L1653 826 C1652.8 822 1651 819.5 1647 818 C1642 816.3 1634 816.5 1629.5 815.3 C1627.4 814.5 1627.7 812.3 1630 811.5 C1635 810 1642 809.7 1648.6 809.7 Z" fill="#fff"/></svg>
</body></html>
